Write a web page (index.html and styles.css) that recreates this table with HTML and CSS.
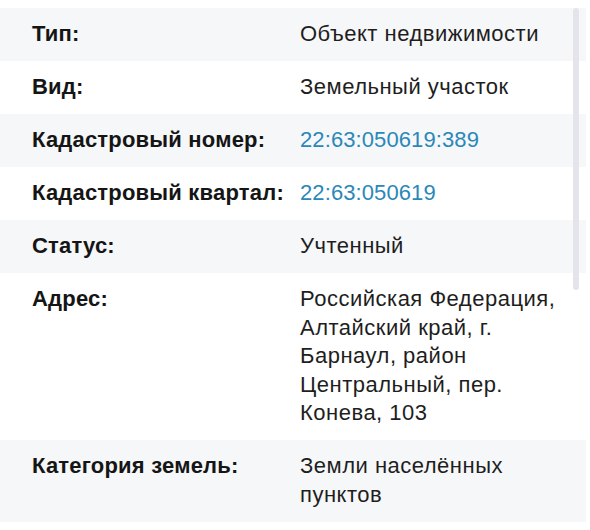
FILE: index.html
```html
<!DOCTYPE html>
<html lang="ru">
<head>
<meta charset="utf-8">
<link rel="stylesheet" href="styles.css">
</head>
<body>
<div class="page">
  <div class="table">
    <div class="row alt"><div class="label">Тип:</div><div class="value">Объект недвижимости</div></div>
    <div class="row"><div class="label">Вид:</div><div class="value">Земельный участок</div></div>
    <div class="row alt"><div class="label">Кадастровый номер:</div><div class="value link">22:63:050619:389</div></div>
    <div class="row"><div class="label">Кадастровый квартал:</div><div class="value link">22:63:050619</div></div>
    <div class="row alt"><div class="label">Статус:</div><div class="value">Учтенный</div></div>
    <div class="row"><div class="label">Адрес:</div><div class="value">Российская Федерация, Алтайский край, г. Барнаул, район Центральный, пер. Конева, 103</div></div>
    <div class="row alt"><div class="label">Категория земель:</div><div class="value">Земли населённых пунктов</div></div>
  </div>
  <div class="scrollbar"></div>
</div>
</body>
</html>
```
FILE: styles.css
```css
html, body {
  margin: 0;
  padding: 0;
  background: #ffffff;
}
.page {
  position: relative;
  width: 590px;
  height: 530px;
  overflow: hidden;
  padding-top: 8px;
  box-sizing: border-box;
  font-family: "Liberation Sans", Arial, sans-serif;
  color: #151515;
}
.table {
  width: 586px;
}
.row {
  display: grid;
  grid-template-columns: 300px 262px;
  padding: 12px 0 12.5px 0;
  line-height: 28.5px;
  font-size: 22px;
}
.row.alt {
  background: #f6f7f9;
}
.label {
  padding-left: 32px;
  font-weight: bold;
  letter-spacing: 0.2px;
}
.value {
  font-weight: normal;
  letter-spacing: 0.5px;
  color: #1e1e1e;
}
.value.link {
  color: #2a88b8;
  letter-spacing: 0.1px;
}
.scrollbar {
  position: absolute;
  left: 573px;
  top: 8px;
  width: 6px;
  height: 282px;
  border-radius: 3px;
  background: #e4e4ea;
}
```
